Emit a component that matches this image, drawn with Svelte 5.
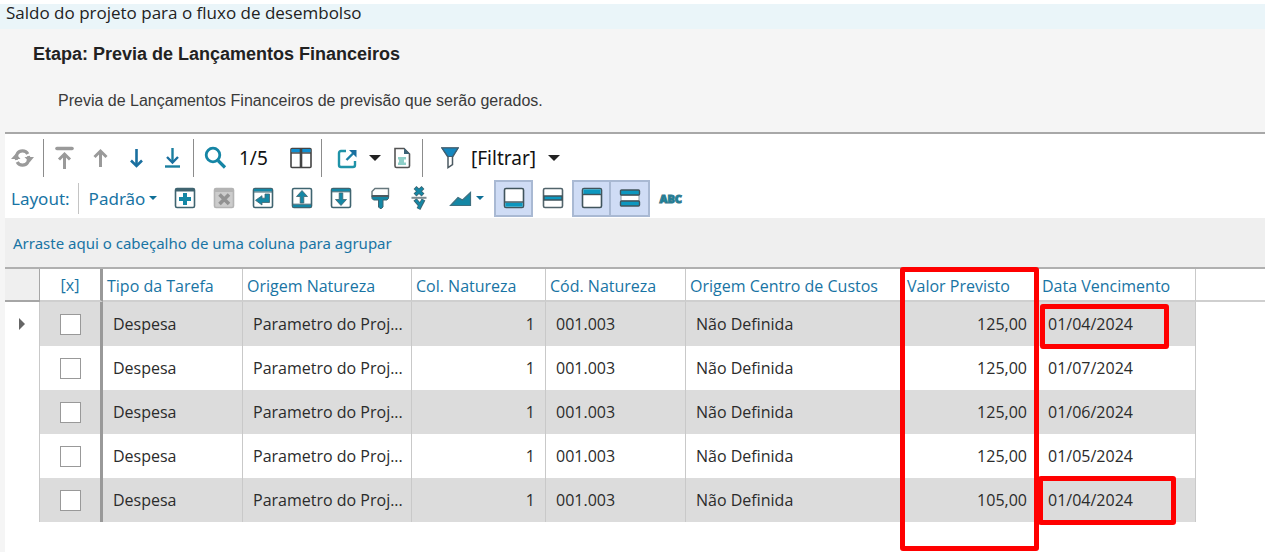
<script>
  let rows = $state([
    { date: '01/04/2024', value: '125,00', checked: false },
    { date: '01/07/2024', value: '125,00', checked: false },
    { date: '01/06/2024', value: '125,00', checked: false },
    { date: '01/05/2024', value: '125,00', checked: false },
    { date: '01/04/2024', value: '105,00', checked: false }
  ]);
</script>

<div class="window">
  <div class="title">Saldo do projeto para o fluxo de desembolso</div>

  <header class="intro">
    <h1>Etapa: Previa de Lançamentos Financeiros</h1>
    <p>Previa de Lançamentos Financeiros de previsão que serão gerados.</p>
  </header>

  <main>
    <div class="bar nav" role="toolbar" aria-label="Navegação">
      <button class="tool" aria-label="Atualizar">
        <svg width="24" height="24" viewBox="0 0 24 24" fill="none" stroke="#9a9a9a" stroke-width="3.200">
          <path d="M5.500 14C4.500 8.500 7 4.800 11.500 4.800c2.600 0 4.300 1.200 5.300 3.200" />
          <path d="M17.500 10c1 5.500-1.500 9.200-6 9.200-2.600 0-4.300-1.200-5.300-3.200" />
          <path d="M0 13h9.500L5 7.500zM13.500 11H23l-4.500 5.500z" fill="#9a9a9a" stroke="none" />
        </svg>
      </button>
      <i class="sep"></i>
      <button class="tool" aria-label="Primeiro">
        <svg width="24" height="24" viewBox="0 0 24 24" fill="none" stroke="#9a9a9a" stroke-width="3">
          <path d="M4 2.500h15" stroke-width="3.600" stroke-linecap="round" /><path d="M11.500 23V9" /><path d="M6 13.500 11.500 8l5.500 5.500" />
        </svg>
      </button>
      <button class="tool" aria-label="Anterior">
        <svg width="24" height="24" viewBox="0 0 24 24" fill="none" stroke="#9a9a9a" stroke-width="3">
          <path d="M11.500 21V5" /><path d="M5.500 11 11.500 5l6 6" />
        </svg>
      </button>
      <button class="tool" aria-label="Próximo">
        <svg width="24" height="24" viewBox="0 0 24 24" fill="none" stroke="#1a6f9f" stroke-width="2.600">
          <path d="M11.500 3v17" /><path d="m6 14.500 5.500 5.500 5.500-5.500" />
        </svg>
      </button>
      <button class="tool" aria-label="Último">
        <svg width="24" height="24" viewBox="0 0 24 24" fill="none" stroke="#1a7f9f" stroke-width="2.400">
          <path d="M11.500 2v14" /><path d="m6 11 5.500 5.500L17 11" stroke="#1a6f9f" /><path d="M4 20.500h15" />
        </svg>
      </button>
      <i class="sep"></i>
      <button class="tool" aria-label="Localizar">
        <svg width="24" height="24" viewBox="0 0 24 24" fill="none" stroke="#1585a5" stroke-width="2.800">
          <circle cx="10" cy="9" r="6.800" /><path d="m15 14.500 7 7" stroke-width="3.200" />
        </svg>
      </button>
      <span class="count">1/5</span>
      <button class="tool" aria-label="Colunas">
        <svg width="24" height="24" viewBox="0 0 24 24">
          <rect x="2" y="2.500" width="20" height="19" rx="1" fill="#fff" stroke="#444" stroke-width="1.600" />
          <path d="M2.500 3h19v3.500h-19z" fill="#0d8ed0" /><path d="M2 7h20" stroke="#444" stroke-width="1.400" />
          <path d="M12 2.500v19" stroke="#444" stroke-width="2.600" />
        </svg>
      </button>
      <i class="sep"></i>
      <span class="group">
        <button class="tool" aria-label="Exportar">
          <svg width="24" height="24" viewBox="0 0 24 24" fill="none" stroke="#1f93a8" stroke-width="2.400">
            <path d="M10 5H5a2 2 0 0 0-2 2v12a2 2 0 0 0 2 2h12a2 2 0 0 0 2-2v-4" />
            <path d="m10.500 14 7.500-7.500" stroke="#1a7fa5" /><path d="M13 4h7.500v7.500z" fill="#1a6f9f" stroke="none" />
          </svg>
        </button>
        <button class="drop" aria-label="Opções de exportação"><i class="caret"></i></button>
      </span>
      <button class="tool" aria-label="Relatório">
        <svg width="24" height="24" viewBox="0 0 24 24">
          <path d="M5 2.500h9l5.500 5.500v12a1.500 1.500 0 0 1-1.500 1.500H6.500A1.500 1.500 0 0 1 5 20z" fill="#fff" stroke="#555" stroke-width="1.600" />
          <path d="M14 2v6h6z" fill="#3c6377" />
          <path d="M8 11h8v2.500h-2v3h2V19H8v-2.500h1v-3H8z" fill="#8fcfc8" />
        </svg>
      </button>
      <i class="sep"></i>
      <button class="filter">
        <svg width="18" height="24" viewBox="0 0 18 24">
          <path d="M1 2h16l-5.500 9v7.500L7 21.500V11z" fill="#fff" stroke="#4c5a62" stroke-width="1.500" />
          <path d="M1 2h16l-5.500 8.500H7z" fill="#1487bf" stroke="#3b6076" stroke-width="1.200" />
        </svg>
        <span>[Filtrar]</span>
        <i class="caret"></i>
      </button>
    </div>

    <div class="bar layout" role="toolbar" aria-label="Layout">
      <span class="label">Layout:</span>
      <i class="sep light"></i>
      <button class="preset">Padrão<i class="caret small"></i></button>
      <button class="box" aria-label="Adicionar">
        <svg width="24" height="24" viewBox="0 0 24 24">
          <rect x="2.500" y="2.500" width="19" height="19" rx="1.500" fill="#fff" stroke="#3f6470" stroke-width="1.600" />
          <path d="M3 3h18v2.500H3z" fill="#3f6470" /><path d="M12 7v12M6 13h12" stroke="#1487a5" stroke-width="4" />
        </svg>
      </button>
      <button class="box" aria-label="Excluir" disabled>
        <svg width="24" height="24" viewBox="0 0 24 24">
          <rect x="2.500" y="2.500" width="19" height="19" rx="1.500" fill="#ccc" stroke="#b4b4b4" stroke-width="1.600" />
          <path d="M3 3h18v3H3z" fill="#b4b4b4" /><path d="m7.500 8.500 9.500 9.500M17 8.500 7.500 18" stroke="#929292" stroke-width="3.600" />
        </svg>
      </button>
      <button class="box" aria-label="Aplicar">
        <svg width="24" height="24" viewBox="0 0 24 24">
          <rect x="2.500" y="2.500" width="19" height="19" rx="1.500" fill="#fff" stroke="#3f6470" stroke-width="1.600" />
          <path d="M3 3h18v2.500H3z" fill="#1487a5" /><path d="M3 6h18" stroke="#3f6470" />
          <path d="M14 8h4.500v8.500H11V19l-6.500-4.700L11 9.700v2.500h3z" fill="#1487a5" stroke="#3f6470" stroke-width=".8" />
        </svg>
      </button>
      <button class="box" aria-label="Exportar layout">
        <svg width="24" height="24" viewBox="0 0 24 24">
          <rect x="2.500" y="2.500" width="19" height="19" rx="1.500" fill="#fff" stroke="#3f6470" stroke-width="1.600" />
          <path d="M3 18.500h18V21H3z" fill="#1487a5" /><path d="M3 18.200h18" stroke="#3f6470" />
          <path d="m12 4.500 5.500 6h-3.700V17h-3.600v-6.500H6.500z" fill="#1487a5" stroke="#3f6470" stroke-width=".8" />
        </svg>
      </button>
      <button class="box" aria-label="Importar layout">
        <svg width="24" height="24" viewBox="0 0 24 24">
          <rect x="2.500" y="2.500" width="19" height="19" rx="1.500" fill="#fff" stroke="#3f6470" stroke-width="1.600" />
          <path d="M3 3h18v2.500H3z" fill="#1487a5" /><path d="M3 5.800h18" stroke="#3f6470" />
          <path d="m12 19.500 5.500-6h-3.700V7h-3.600v6.500H6.500z" fill="#1487a5" stroke="#3f6470" stroke-width=".8" />
        </svg>
      </button>
      <button class="box" aria-label="Formatar">
        <svg width="24" height="24" viewBox="0 0 24 24">
          <path d="M7 2.500h13.500v8H4V5.500z" fill="#fff" stroke="#66777d" stroke-width="1.400" />
          <path d="M4 9.500h16.500v3L19 14h-4v7l-1.500 1.500H12L10.500 21v-7h-5L4 12.500z" fill="#1487a5" stroke="#3f6470" />
          <path d="M4 10h16.500" stroke="#4c5a60" stroke-width="2" />
        </svg>
      </button>
      <button class="box" aria-label="Fórmula">
        <svg width="24" height="24" viewBox="0 0 24 24" fill="none">
          <path d="m8 1.500 8 7.500M16 1.500 8 9" stroke="#3f6470" stroke-width="4.200" /><path d="m8.500 2 7 6.500M15.500 2l-7 6.500" stroke="#1487a5" stroke-width="2.600" />
          <path d="m8 13.500 4.300 5M16.500 13.500l-5 9.500" stroke="#3f6470" stroke-width="4.200" /><path d="m8.500 14 4 4.500M16 14l-4.300 8.500" stroke="#1487a5" stroke-width="2.600" />
          <path d="M4.500 11.800h15" stroke="#7b8a90" stroke-width="2" />
        </svg>
      </button>
      <button class="box chart" aria-label="Gráfico">
        <svg width="24" height="24" viewBox="0 0 24 24">
          <path d="M1.500 19.500 9 11.500l4.500 2.500L21.500 6.500v13z" fill="#1487a5" stroke="#3f7080" stroke-width="1.200" />
        </svg>
        <i class="caret small"></i>
      </button>
      <button class="box on" aria-label="Rodapé" aria-pressed="true">
        <svg width="24" height="24" viewBox="0 0 24 24">
          <rect x="2.500" y="2.500" width="19" height="19" rx="1.500" fill="#fff" stroke="#40545c" stroke-width="1.600" />
          <path d="M3.300 16.500h17.400v4.200H3.300z" fill="#0c97bf" /><path d="M3 16h18" stroke="#40545c" stroke-width="1.400" />
        </svg>
      </button>
      <button class="box" aria-label="Rodapé do grupo" aria-pressed="false">
        <svg width="24" height="24" viewBox="0 0 24 24">
          <rect x="2.500" y="2.500" width="19" height="19" rx="1.500" fill="#fff" stroke="#52646b" stroke-width="1.600" />
          <path d="M3 10h18v4H3z" fill="#0c97bf" stroke="#40545c" stroke-width="1.400" />
        </svg>
      </button>
      <button class="box on" aria-label="Painel de agrupamento" aria-pressed="true">
        <svg width="24" height="24" viewBox="0 0 24 24">
          <rect x="2.500" y="2.500" width="19" height="19" rx="1.500" fill="#fff" stroke="#40545c" stroke-width="1.600" />
          <path d="M3.300 3.300h17.400v4.700H3.300z" fill="#0c97bf" /><path d="M3 8.500h18" stroke="#40545c" stroke-width="1.400" />
        </svg>
      </button>
      <button class="box on joined" aria-label="Linhas alternadas" aria-pressed="true">
        <svg width="24" height="24" viewBox="0 0 24 24">
          <rect x="3" y="9" width="18" height="6" fill="#fff" stroke="#8a999f" />
          <rect x="2.500" y="4" width="19" height="5" rx="1" fill="#0c97bf" stroke="#40545c" stroke-width="1.400" />
          <rect x="2.500" y="15" width="19" height="5" rx="1" fill="#0c97bf" stroke="#40545c" stroke-width="1.400" />
        </svg>
      </button>
      <button class="abc">ABC</button>
    </div>

    <div class="grouping">Arraste aqui o cabeçalho de uma coluna para agrupar</div>

    <div class="grid">
      <table>
        <colgroup>
          <col class="c-mark" /><col class="c-check" /><col class="c-type" /><col class="c-origin" /><col class="c-col" />
          <col class="c-code" /><col class="c-center" /><col class="c-value" /><col class="c-date" /><col />
        </colgroup>
        <thead>
          <tr>
            <th class="corner"></th>
            <th class="check">[x]</th>
            <th>Tipo da Tarefa</th>
            <th>Origem Natureza</th>
            <th>Col. Natureza</th>
            <th>Cód. Natureza</th>
            <th>Origem Centro de Custos</th>
            <th>Valor Previsto</th>
            <th>Data Vencimento</th>
            <th class="rest"></th>
          </tr>
        </thead>
        <tbody>
          {#each rows as row, i}
            <tr>
              <td class="mark">{#if i === 0}<i class="current"></i>{/if}</td>
              <td class="check"><input type="checkbox" aria-label="Selecionar linha {i + 1}" bind:checked={row.checked} /></td>
              <td>Despesa</td>
              <td>Parametro do Proj...</td>
              <td class="num">1</td>
              <td>001.003</td>
              <td>Não Definida</td>
              <td class="num">{row.value}</td>
              <td>{row.date}</td>
              <td class="rest"></td>
            </tr>
          {/each}
        </tbody>
      </table>
      <div class="callout values"></div>
      <div class="callout first"></div>
      <div class="callout last"></div>
    </div>
  </main>
</div>

<style>
  :global(body) {
    margin: 0;
    background: #fff;
  }
  .window {
    min-height: 100vh;
    box-sizing: border-box;
    padding-top: 4px;
    font-family: 'Open Sans', 'Noto Sans', sans-serif;
    font-size: 16px;
    color: #2b2b2b;
    display: flex;
    flex-direction: column;
  }
  .title {
    background: #eaf5f9;
    color: #222;
    font-size: 17px;
    line-height: 18px;
    padding: 0 6px 7px;
  }
  .intro {
    background: #f5f5f5;
    padding: 14px 33px 21px;
    font-family: 'Liberation Sans', Arial, sans-serif;
  }
  h1 {
    margin: 0;
    font-size: 18px;
    line-height: 22px;
    font-weight: bold;
    color: #222;
  }
  p {
    margin: 26px 0 0 25px;
    font-size: 16px;
    line-height: 20px;
    color: #3a3a3a;
  }
  main {
    flex: 1;
    border-left: 5px solid #f5f5f5;
  }
  button {
    border: 0;
    padding: 0;
    margin: 0;
    background: none;
    font: inherit;
    color: inherit;
    display: flex;
    align-items: center;
    justify-content: center;
  }
  svg {
    display: block;
    flex: none;
  }
  .bar {
    display: flex;
    align-items: center;
    font-family: 'Noto Sans', 'Open Sans', sans-serif;
  }
  .nav {
    border-top: 2px solid #a8a8a8;
    height: 45px;
    padding-top: 1px;
  }
  .tool {
    width: 36px;
    height: 36px;
  }
  .sep {
    width: 1px;
    height: 38px;
    margin: 0 3px 0 2px;
    background: #8c8c8c;
  }
  .sep.light {
    height: 31px;
    margin: 0 10px 0 8px;
    background: #c4c4c4;
  }
  .count {
    width: 50px;
    box-sizing: border-box;
    padding-left: 6px;
    font-size: 19px;
    color: #111;
  }
  .group {
    display: flex;
    margin-left: 5px;
  }
  .drop {
    width: 18px;
  }
  .caret {
    border: 6px solid transparent;
    border-top-color: #222;
    border-bottom: 0;
  }
  .caret.small {
    border-width: 4px;
    border-top-color: #0f6f96;
    border-bottom: 0;
  }
  .filter {
    margin-left: 15px;
    gap: 12px;
    font-size: 19px;
    color: #111;
  }
  .layout {
    height: 36px;
    padding: 0 0 2px 6px;
    color: #1874a4;
    font-size: 17px;
  }
  .preset {
    gap: 4px;
    margin-right: 8px;
  }
  .box {
    width: 39px;
    height: 37px;
    box-sizing: border-box;
  }
  .chart {
    width: 56px;
    gap: 3px;
  }
  .on {
    background: #cfdcf5;
    border: 2px solid #a9b9d3;
  }
  .joined {
    border-left: 0;
  }
  .abc {
    margin-left: 9px;
    font-size: 11px;
    font-weight: 900;
    color: #1487a5;
    -webkit-text-stroke: 1px #33788a;
  }
  .grouping {
    background: #efefef;
    color: #1874a4;
    font-family: 'Noto Sans', 'Open Sans', sans-serif;
    font-size: 15px;
    padding: 14px 8px 13px;
    line-height: 22px;
  }
  .grid {
    position: relative;
    border-top: 2px solid #b0b0b0;
  }
  table {
    width: 100%;
    border-collapse: separate;
    border-spacing: 0;
    table-layout: fixed;
  }
  .c-mark { width: 35px; }
  .c-check { width: 63px; }
  .c-type { width: 140px; }
  .c-origin { width: 169px; }
  .c-col { width: 134px; }
  .c-code { width: 140px; }
  .c-center { width: 217px; }
  .c-value { width: 135px; }
  .c-date { width: 158px; }
  th,
  td {
    box-sizing: border-box;
    white-space: nowrap;
    font-weight: normal;
    border-right: 1px solid #c9c9c9;
  }
  th {
    height: 33px;
    padding: 2px 4px 0;
    text-align: left;
    color: #1874a4;
    border-bottom: 2px solid #cfcfcf;
  }
  td {
    height: 44px;
    padding: 0 10px;
  }
  tbody tr:nth-child(odd) td {
    background: #dcdcdc;
  }
  th.corner {
    background: #efefef;
    border-color: #a6a6a6;
  }
  th.check,
  td.check {
    padding: 0;
    text-align: center;
    border-right: 3px solid #999;
  }
  tbody tr td.mark,
  tbody tr td.rest {
    background: #fff;
    padding: 0;
  }
  th.rest,
  td.rest {
    border-right: 0;
  }
  .num {
    text-align: right;
  }
  .current {
    display: block;
    width: 0;
    margin-left: 14px;
    border: 6px solid transparent;
    border-left-color: #666;
    border-right: 0;
  }
  input {
    appearance: none;
    display: block;
    width: 21px;
    height: 21px;
    margin: 0 auto;
    box-sizing: border-box;
    background: #fff;
    border: 1px solid #999;
  }
  input:checked {
    background: #1874a4;
  }
  .callout {
    position: absolute;
    box-sizing: border-box;
    border: 5px solid #f00;
    border-radius: 3px;
    pointer-events: none;
  }
  .values {
    left: 895px;
    top: -2px;
    width: 139px;
    height: 284px;
  }
  .first {
    left: 1035px;
    top: 35px;
    width: 129px;
    height: 45px;
  }
  .last {
    left: 1033px;
    top: 207px;
    width: 138px;
    height: 49px;
  }
</style>
